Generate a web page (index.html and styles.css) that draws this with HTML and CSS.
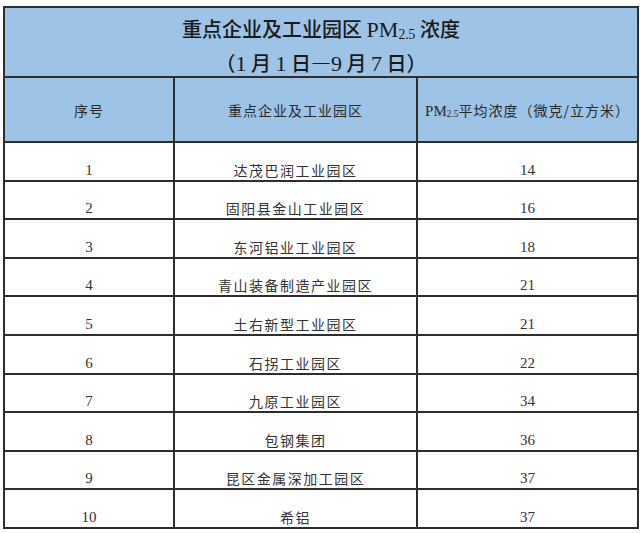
FILE: index.html
```html
<!DOCTYPE html>
<html lang="zh-CN">
<head>
<meta charset="utf-8">
<title>重点企业及工业园区 PM2.5 浓度</title>
<link rel="stylesheet" href="styles.css">
</head>
<body>
<div class="wrap">
<table class="pm">
  <colgroup>
    <col class="c1"><col class="c2"><col class="c3">
  </colgroup>
  <thead>
    <tr class="title-row">
      <th colspan="3" class="title">
        <div class="t1">重点企业及工业园区 <span class="lat">PM<sub>2.5</sub></span> 浓度</div>
        <div class="t2">（<span class="lat">1</span> 月 <span class="lat">1</span> 日—<span class="lat">9</span> 月 <span class="lat">7</span> 日）</div>
      </th>
    </tr>
    <tr class="head-row">
      <th>序号</th>
      <th>重点企业及工业园区</th>
      <th><span class="lat">PM<sub>2.5</sub></span>平均浓度（微克/立方米）</th>
    </tr>
  </thead>
  <tbody>
    <tr><td class="num">1</td><td class="name">达茂巴润工业园区</td><td class="num">14</td></tr>
    <tr><td class="num">2</td><td class="name">固阳县金山工业园区</td><td class="num">16</td></tr>
    <tr><td class="num">3</td><td class="name">东河铝业工业园区</td><td class="num">18</td></tr>
    <tr><td class="num">4</td><td class="name">青山装备制造产业园区</td><td class="num">21</td></tr>
    <tr><td class="num">5</td><td class="name">土右新型工业园区</td><td class="num">21</td></tr>
    <tr><td class="num">6</td><td class="name">石拐工业园区</td><td class="num">22</td></tr>
    <tr><td class="num">7</td><td class="name">九原工业园区</td><td class="num">34</td></tr>
    <tr><td class="num">8</td><td class="name">包钢集团</td><td class="num">36</td></tr>
    <tr><td class="num">9</td><td class="name">昆区金属深加工园区</td><td class="num">37</td></tr>
    <tr><td class="num">10</td><td class="name">希铝</td><td class="num">37</td></tr>
  </tbody>
</table>
</div>
</body>
</html>
```

FILE: styles.css
```css
html, body {
  margin: 0;
  padding: 0;
  background: #ffffff;
}

.wrap {
  padding: 6px 0 0 3px;
}

.pm {
  width: 634px;
  border-collapse: collapse;
  table-layout: fixed;
  font-family: "Noto Sans CJK SC", sans-serif;
  color: #333333;
}

.c1 { width: 170px; }
.c2 { width: 243px; }
.c3 { width: 221px; }

.pm th,
.pm td {
  border: 2px solid #2e2e2e;
  padding: 0;
  text-align: center;
}

.lat {
  font-family: "Liberation Serif", "Times New Roman", serif;
}

.lat sub {
  font-size: 0.62em;
  vertical-align: -0.15em;
  line-height: 0;
}

.title-row {
  height: 68px;
}

.title {
  background: #9dc3e6;
  color: #1a1a1a;
  font-size: 20px;
  font-weight: 500;
  vertical-align: top;
}

.t1 {
  line-height: 42px;
}

.t2 {
  line-height: 24px;
}

.title .lat {
  font-size: 22px;
}

.head-row {
  height: 65px;
}

.head-row th {
  background: #9dc3e6;
  font-size: 14px;
  font-weight: 400;
  letter-spacing: 1px;
  color: #2a2a2a;
  vertical-align: middle;
  padding-top: 1px;
}

.head-row .lat {
  font-size: 15px;
  letter-spacing: 0;
}

tbody tr {
  height: 38.6px;
}

tbody td {
  vertical-align: bottom;
  line-height: 20px;
  padding-bottom: 3px;
}

.name {
  font-size: 14px;
  letter-spacing: 1.5px;
}

.num {
  font-family: "Liberation Serif", "Times New Roman", serif;
  font-size: 15px;
}
```
